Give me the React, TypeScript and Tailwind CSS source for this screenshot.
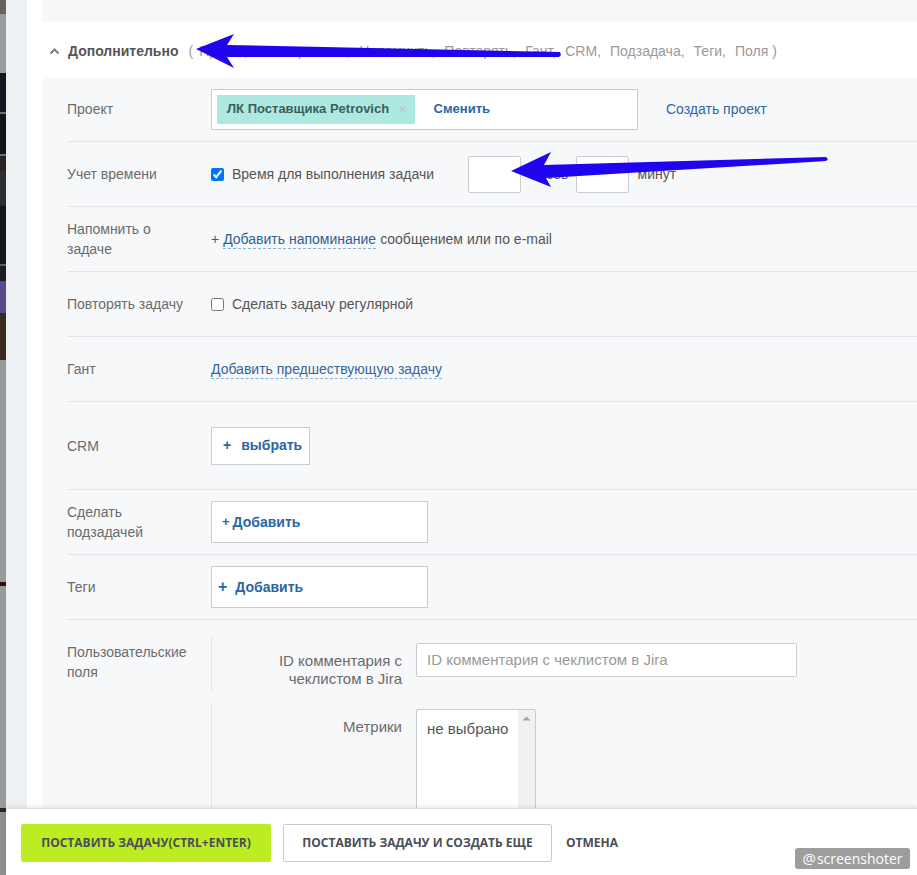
import React from "react";

const strip: [number, string][] = [
  [14, "#6b6159"],
  [59, "#9b9b9b"],
  [39, "#141820"],
  [2, "#6d6f72"],
  [40, "#10141b"],
  [2, "#6d6f72"],
  [15, "#2a2220"],
  [35, "#2a2d31"],
  [58, "#14161a"],
  [2, "#5b5d60"],
  [15, "#1b1d20"],
  [32, "#5b4a89"],
  [47, "#3b2a22"],
  [222, "#9a9a9a"],
  [4, "#3a0a0a"],
  [222, "#9a9a9a"],
  [4, "#2a2a2a"],
  [63, "#8f8f8f"],
];

function Row({
  label,
  h,
  children,
}: {
  label: React.ReactNode;
  h: string;
  children: React.ReactNode;
}) {
  return (
    <div className={`flex items-center border-b border-[#e3e5e8] ${h}`}>
      <div className="w-[144px] shrink-0 text-[14px] leading-[20px] text-[#6b6b6b]">{label}</div>
      <div className="flex items-center text-[14px] text-[#555]">{children}</div>
    </div>
  );
}

export default function App() {
  return (
    <div
      className="relative flex h-[875px] w-[917px] overflow-hidden bg-white"
      style={{ fontFamily: '"Liberation Sans", Arial, sans-serif' }}
    >
      <div className="flex w-[6px] shrink-0 flex-col">
        {strip.map(([hh, c], i) => (
          <div key={i} style={{ height: hh, background: c }} />
        ))}
      </div>
      <div className="w-[21px] shrink-0 bg-[#eef1f4]" />
      <div className="flex min-w-0 flex-1 flex-col bg-white">
        <div className="ml-[15px] h-[22px] bg-[#f7f8fa]" />
        <div className="flex h-[55px] items-center bg-white pl-[22px] pt-[3px]">
          <svg width="11" height="8" viewBox="0 0 11 8" className="mr-[8px]">
            <path d="M1.5 6.5 L5.5 2.5 L9.5 6.5" stroke="#7b7f85" strokeWidth="2" fill="none" />
          </svg>
          <span className="text-[14px] font-bold text-[#555]">Дополнительно</span>
          <span className="ml-[10px] flex text-[14px] text-[#9a9a9a]">
            <span>(</span>
            {["Проект", "Учет времени", "Напомнить", "Повторять", "Гант", "CRM", "Подзадача", "Теги"].map((t) => (
              <span key={t} className="ml-[6px] mr-[3px]">
                {t},
              </span>
            ))}
            <span className="ml-[6px]">Поля )</span>
          </span>
        </div>
        <div className="ml-[15px] flex-1 bg-[#f7f8fa] pl-[25px]">
          <Row label="Проект" h="h-[65px]">
            <div className="flex h-[41px] w-[427px] items-center border border-[#c9cdd2] bg-white px-[5px]">
              <div className="flex h-[29px] items-center bg-[#ade8e1] pl-[10px] pr-[9px]">
                <span className="text-[13px] font-bold text-[#3c5f5b]">ЛК Поставщика Petrovich</span>
                <span className="ml-[10px] text-[11px] font-bold text-[#b7c9c6]">×</span>
              </div>
              <span className="ml-[19px] text-[13px] font-bold text-[#2a66a6]">Сменить</span>
            </div>
            <span className="ml-[28px] text-[14px] text-[#2d67a5]">Создать проект</span>
          </Row>
          <Row label="Учет времени" h="h-[65px]">
            <input type="checkbox" defaultChecked className="m-0 h-[13px] w-[13px]" />
            <span className="ml-[8px]">Время для выполнения задачи</span>
            <div className="ml-[34px] h-[37px] w-[53px] rounded-[2px] border border-[#c9cdd2] bg-white" />
            <span className="ml-[10px]">часов</span>
            <div className="ml-[7px] h-[37px] w-[53px] rounded-[2px] border border-[#c9cdd2] bg-white" />
            <span className="ml-[9px]">минут</span>
          </Row>
          <Row
            label={
              <>
                Напомнить о
                <br />
                задаче
              </>
            }
            h="h-[65px]"
          >
            <span className="text-[#2d5f98]">+</span>
            <span className="ml-[4px] border-b border-dashed border-[#8db0d8] leading-[18px] text-[#2d5f98]">
              Добавить напоминание
            </span>
            <span className="ml-[4px]">сообщением или по e-mail</span>
          </Row>
          <Row label="Повторять задачу" h="h-[65px]">
            <input type="checkbox" className="m-0 h-[13px] w-[13px]" />
            <span className="ml-[8px]">Сделать задачу регулярной</span>
          </Row>
          <Row label="Гант" h="h-[65px]">
            <span className="border-b border-dashed border-[#8db0d8] leading-[18px] text-[#35659c]">
              Добавить предшествующую задачу
            </span>
          </Row>
          <Row label="CRM" h="h-[88px]">
            <div className="flex h-[38px] w-[99px] items-center border border-[#c9cdd2] bg-white pl-[11px] text-[14px] font-bold text-[#2a66a6]">
              <span>+</span>
              <span className="ml-[10px]">выбрать</span>
            </div>
          </Row>
          <Row
            label={
              <>
                Сделать
                <br />
                подзадачей
              </>
            }
            h="h-[65px]"
          >
            <div className="flex h-[42px] w-[217px] items-center border border-[#c9cdd2] bg-white pl-[10px] text-[14px] font-bold text-[#2a66a6]">
              <span className="text-[13px]">+</span>
              <span className="ml-[3px]">Добавить</span>
            </div>
          </Row>
          <Row label="Теги" h="h-[65px]">
            <div className="flex h-[42px] w-[217px] items-center border border-[#c9cdd2] bg-white pl-[6px] text-[14px] font-bold text-[#2a66a6]">
              <span className="text-[16px]">+</span>
              <span className="ml-[8px]">Добавить</span>
            </div>
          </Row>
          <div className="flex pt-[17px]">
            <div className="w-[144px] shrink-0 pt-[5px] text-[14px] leading-[20px] text-[#6b6b6b]">
              Пользовательские
              <br />
              поля
            </div>
            <div className="flex flex-col gap-[11px]">
              <div className="flex h-[55px] border-l border-[#e3e5e8]">
                <div className="w-[190px] pt-[15px] text-right text-[15px] leading-[18px] text-[#6b6b6b]">
                  ID комментария с
                  <br />
                  чеклистом в Jira
                </div>
                <div className="ml-[14px] mt-[6px] flex h-[34px] w-[381px] items-center rounded-[2px] border border-[#c9cdd2] bg-white pl-[10px] text-[15px] text-[#9a9a9a]">
                  ID комментария с чеклистом в Jira
                </div>
              </div>
              <div className="flex h-[140px] border-l border-[#e3e5e8]">
                <div className="w-[190px] pt-[15px] text-right text-[15px] leading-[18px] text-[#6b6b6b]">
                  Метрики
                </div>
                <div className="ml-[14px] mt-[6px] flex h-[130px] w-[120px] rounded-[2px] border border-[#c9cdd2] bg-white">
                  <div className="flex-1 pl-[10px] pt-[8px] text-[15px] text-[#555]">не выбрано</div>
                  <div className="flex w-[17px] justify-center bg-[#f1f1f1] pt-[6px]">
                    <svg width="9" height="5" viewBox="0 0 9 5">
                      <path d="M0.5 4.5 L4.5 0.5 L8.5 4.5 Z" fill="#a3a3a3" />
                    </svg>
                  </div>
                </div>
              </div>
            </div>
          </div>
        </div>
      </div>

      {/* footer */}
      <div
        className="absolute bottom-0 left-[6px] right-0 top-[808px] flex items-start border-t border-[#dcdcdc] bg-white pl-[15px] pt-[15px] shadow-[0_-2px_4px_rgba(0,0,0,0.08)]"
        style={{ fontFamily: '"Open Sans", "Liberation Sans", sans-serif' }}
      >
        <div className="flex h-[38px] w-[250px] items-center justify-center rounded-[2px] bg-[#bdec22] text-[12px] font-bold text-[#4a4e55]">
          ПОСТАВИТЬ ЗАДАЧУ(CTRL+ENTER)
        </div>
        <div className="ml-[12px] flex h-[38px] w-[269px] items-center justify-center rounded-[2px] border border-[#c8ccd2] bg-white text-[12px] font-bold text-[#4a4e55]">
          ПОСТАВИТЬ ЗАДАЧУ И СОЗДАТЬ ЕЩЕ
        </div>
        <div className="ml-[14px] flex h-[38px] items-center text-[12px] font-bold text-[#4a4e55]">ОТМЕНА</div>
      </div>

      <div
        className="absolute left-[795px] top-[848px] flex h-[21px] w-[115px] items-center justify-center rounded-[3px] bg-[#9d9d9d] text-[14px] text-white"
        style={{ fontFamily: '"Open Sans", "Liberation Sans", sans-serif' }}
      >
        <span className="mr-[1px] text-[15px]">@</span>screenshoter
      </div>

      {/* annotation arrows */}
      <svg className="pointer-events-none absolute left-0 top-0" width="917" height="875" viewBox="0 0 917 875">
        <polygon
          points="196,49 234,34 227,45 560,52 561,55 559,57 227,57 234,68"
          fill="#2104ee"
        />
        <polygon
          points="511,171 551,152 544,165 826,157 828,159 826,161 546,178 551,187"
          fill="#2104ee"
        />
      </svg>
    </div>
  );
}
